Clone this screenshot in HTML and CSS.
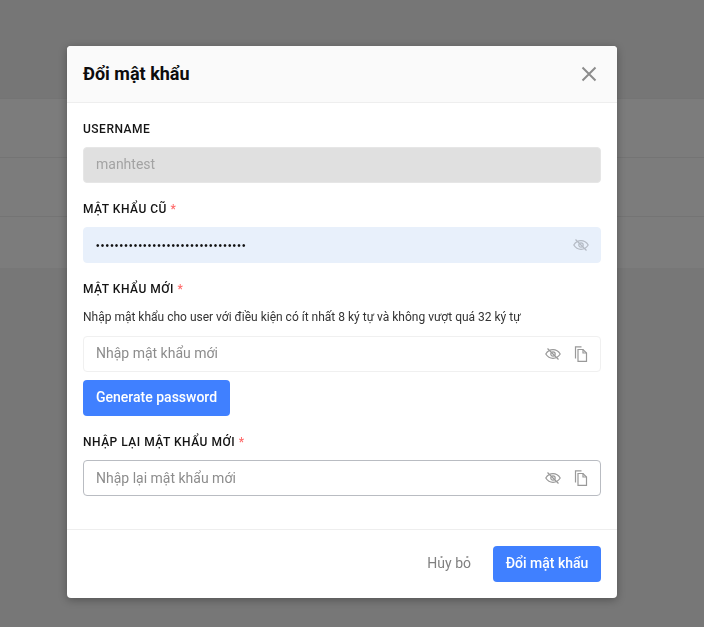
FILE: index.html
```html
<!DOCTYPE html>
<html lang="vi">
  <head>
    <meta charset="utf-8">
    <title>Đổi mật khẩu</title>
    <meta name="viewport" content="width=device-width">
    <link rel="stylesheet" href="styles.css">
  </head>
  <body>
    <!-- table behind the overlay -->
    <div class="page">
      <div class="page-head"></div>
      <div class="page-row"></div>
      <div class="page-row"></div>
      <div class="page-row page-row-last"></div>
    </div>

    <div class="overlay">
      <div class="modal">
        <div class="modal-header">
          <h2 class="modal-title">Đổi mật khẩu</h2>
          <svg class="icon-close" width="16" height="16" viewBox="0 0 16 16">
            <path d="M1.5 1.500l13 13M14.500 1.500l-13 13" fill="none" stroke="#8c8c8c" stroke-width="2"/>
          </svg>
        </div>

        <div class="modal-body">
          <label class="field-label">USERNAME</label>
          <div class="input input-disabled"><span class="input-text">manhtest</span></div>

          <label class="field-label">MẬT KHẨU CŨ <span class="required">*</span></label>
          <div class="input input-filled">
            <span class="input-dots">••••••••••••••••••••••••••••••••</span>
            <svg class="icon icon-light" width="16" height="16" viewBox="0 0 16 16">
              <path d="M.8 8c1.800-2.900 4.200-4.300 7.200-4.300s5.400 1.400 7.200 4.300c-1.800 2.900-4.200 4.300-7.200 4.300S2.600 10.900.8 8z"/>
              <circle cx="8" cy="8" r="2.200"/>
              <path d="M2.500 2.500l11 11"/>
            </svg>
          </div>

          <label class="field-label">MẬT KHẨU MỚI <span class="required">*</span></label>
          <p class="field-hint">Nhập mật khẩu cho user với điều kiện có ít nhất 8 ký tự và không vượt quá 32 ký tự</p>
          <div class="input">
            <span class="input-placeholder">Nhập mật khẩu mới</span>
            <svg class="icon" width="16" height="16" viewBox="0 0 16 16">
              <path d="M.8 8c1.800-2.900 4.200-4.300 7.200-4.300s5.400 1.400 7.200 4.300c-1.800 2.900-4.200 4.300-7.200 4.300S2.600 10.900.8 8z"/>
              <circle cx="8" cy="8" r="2.200"/>
              <path d="M2.500 2.500l11 11"/>
            </svg>
            <svg class="icon" width="16" height="16" viewBox="0 0 16 16">
              <path d="M2.500 12.500V.8h6"/>
              <path d="M5 3.500h5l3.500 3.500v8.300H5z"/>
              <path d="M10 3.500V7h3.500"/>
            </svg>
          </div>
          <button class="btn btn-primary btn-generate">Generate password</button>

          <label class="field-label">NHẬP LẠI MẬT KHẨU MỚI <span class="required">*</span></label>
          <div class="input input-hover">
            <span class="input-placeholder">Nhập lại mật khẩu mới</span>
            <svg class="icon" width="16" height="16" viewBox="0 0 16 16">
              <path d="M.8 8c1.800-2.900 4.200-4.300 7.200-4.300s5.400 1.400 7.200 4.300c-1.800 2.900-4.200 4.300-7.200 4.300S2.600 10.900.8 8z"/>
              <circle cx="8" cy="8" r="2.200"/>
              <path d="M2.500 2.500l11 11"/>
            </svg>
            <svg class="icon" width="16" height="16" viewBox="0 0 16 16">
              <path d="M2.500 12.500V.8h6"/>
              <path d="M5 3.500h5l3.500 3.500v8.300H5z"/>
              <path d="M10 3.500V7h3.500"/>
            </svg>
          </div>
        </div>

        <div class="modal-footer">
          <button class="btn btn-text">Hủy bỏ</button>
          <button class="btn btn-primary btn-submit">Đổi mật khẩu</button>
        </div>
      </div>
    </div>
  </body>
</html>
```

FILE: styles.css
```css
html, body {
  height: 100%;
}

body {
  margin: 0;
  background-color: #777;
  font-family: Roboto, sans-serif;
  overflow: hidden;
}

/* page under the overlay */
.page-head {
  height: 98px;
  background-color: #767676;
}

.page-row {
  height: 58px;
  background-color: #7c7c7c;
  border-top: 1px solid #747474;
}

.page-row-last {
  height: 51px;
}

.overlay {
  position: fixed;
  top: 0;
  left: 0;
  right: 20px;
  bottom: 0;
  display: flex;
  justify-content: center;
  align-items: flex-start;
  padding-top: 46px;
}

.modal {
  width: 550px;
  background-color: #fff;
  border-radius: 4px;
  box-shadow: 0 2px 8px rgba(0, 0, 0, 0.3);
}

.modal-header {
  height: 56px;
  display: flex;
  align-items: center;
  justify-content: space-between;
  padding: 0 20px 0 16px;
  background-color: #fafafa;
  border-bottom: 1px solid #eee;
  border-radius: 4px 4px 0 0;
}

.modal-title {
  margin: 0 0 2px;
  font-size: 18px;
  font-weight: 700;
  color: #0d0d0d;
}

.icon-close {
  display: block;
}

.modal-body {
  padding: 16px 16px 33px;
}

.field-label {
  display: block;
  font-size: 12px;
  line-height: 20px;
  font-weight: 500;
  letter-spacing: 0.5px;
  color: #141414;
  margin-top: 16px;
  margin-bottom: 8px;
}

.field-label:first-child {
  margin-top: 0;
}

.required {
  color: #ff6b6b;
  letter-spacing: 0;
}

.field-hint {
  margin: 0 0 8px;
  font-size: 12px;
  line-height: 21px;
  color: #333;
}

.input {
  box-sizing: border-box;
  height: 36px;
  display: flex;
  align-items: center;
  gap: 12px;
  padding: 0 11px 0 12px;
  font-size: 14px;
  border: 1px solid #f0f0f0;
  border-radius: 4px;
  background-color: #fff;
}

.input-disabled {
  background-color: #e0e0e0;
  border-color: #e6e6e6;
  color: #a3a3a3;
}

.input-filled {
  background-color: #e8f0fb;
  border-color: #e8f0fb;
}

.input-hover {
  border-color: #b9bcc2;
}

.input-text,
.input-placeholder,
.input-dots {
  flex: 1;
  padding-bottom: 2px;
}

.input-hover .input-placeholder {
  padding-bottom: 0;
}

.input-placeholder {
  color: #8c8c8c;
}

.input-dots {
  font-family: "Liberation Sans", sans-serif;
  font-size: 10px;
  letter-spacing: 1.210px;
  color: #111;
  padding-bottom: 0;
}

.icon {
  display: block;
  flex-shrink: 0;
  fill: none;
  stroke: #999;
  stroke-width: 1.200;
}

.icon-light {
  stroke: #b4bac4;
}

.btn {
  height: 36px;
  border: 0;
  border-radius: 4px;
  padding: 0 13px 2px;
  font-family: Roboto, sans-serif;
  font-size: 14px;
  font-weight: 500;
  background: none;
}

.btn-primary {
  background-color: #4080ff;
  color: #fff;
}

.btn-generate {
  display: block;
  margin-top: 8px;
}

.btn-submit {
  width: 108px;
  padding: 0 0 2px;
}

.btn-text {
  color: #808080;
  font-weight: 400;
}

.modal-footer {
  display: flex;
  justify-content: flex-end;
  gap: 9px;
  padding: 16px;
  border-top: 1px solid #eee;
}
```
